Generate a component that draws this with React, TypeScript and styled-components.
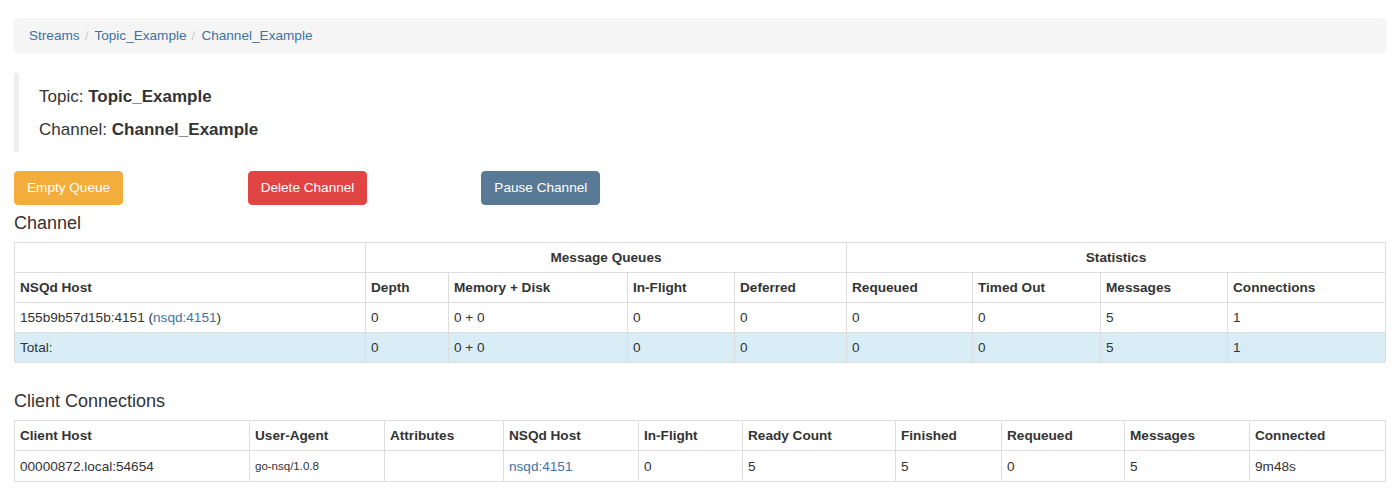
import React from 'react';
import styled, { createGlobalStyle } from 'styled-components';

const Global = createGlobalStyle`
  html, body { margin: 0; padding: 0; background: #fff; }
  body {
    font-family: "Liberation Sans", Arial, Helvetica, sans-serif;
    font-size: 13.6px;
    line-height: 20px;
    color: #333;
  }
`;

const Page = styled.div`
  padding: 18px 14px 0 14px;
`;

const Breadcrumb = styled.ol`
  list-style: none;
  margin: 0 0 20px 0;
  padding: 8px 15px;
  height: 19px;
  display: flex;
  align-items: center;
  background: #f5f5f5;
  border-radius: 4px;
`;

const Crumb = styled.li`
  color: #3d73a5;
  & + &::before {
    content: '/';
    color: #ccc;
    padding: 0 6px 0 5px;
  }
`;

const Quote = styled.blockquote`
  margin: 0 0 20px 0;
  padding: 11px 20px 10px 20px;
  border-left: 5px solid #eee;
  font-size: 17px;
  line-height: 25px;
  display: flex;
  flex-direction: column;
  gap: 8px;
`;

const ButtonRow = styled.div`
  display: grid;
  grid-template-columns: repeat(6, 1fr);
  margin: -1px -15px 0 -15px;
`;

const ButtonCell = styled.div`
  padding: 0 15px;
`;

const Button = styled.button<{ $bg: string }>`
  font-family: inherit;
  font-size: 13.6px;
  line-height: 20px;
  color: #fff;
  background: ${p => p.$bg};
  border: 1px solid ${p => p.$bg};
  border-radius: 4px;
  padding: 6px 12px;
  cursor: pointer;
`;

const Heading = styled.h4<{ $top: number }>`
  font-size: 18px;
  font-weight: normal;
  line-height: 20px;
  margin: ${p => p.$top}px 0 9px 0;
`;

const Table = styled.table`
  width: 100%;
  table-layout: fixed;
  border-collapse: collapse;
  margin-bottom: 20px;
`;

const Th = styled.th<{ $center?: boolean }>`
  border: 1px solid #ddd;
  padding: 5px 5px;
  height: 19px;
  line-height: 19px;
  text-align: ${p => (p.$center ? 'center' : 'left')};
  font-weight: bold;
`;

const Td = styled.td`
  border: 1px solid #ddd;
  padding: 5px 5px;
  height: 19px;
  line-height: 19px;
  white-space: nowrap;
`;

const Row = styled.tr<{ $info?: boolean }>`
  background: ${p => (p.$info ? '#d9edf7' : 'transparent')};
`;

const Link = styled.a`
  color: #3d73a5;
  text-decoration: none;
`;

const Small = styled.small`
  font-size: 11.5px;
`;

const channelCols = [351, 83, 179, 107, 112, 126, 128, 127, 158];
const clientCols = [235, 135, 119, 135, 104, 153, 106, 123, 125, 136];

const ColGroup = ({ widths }: { widths: number[] }) => (
  <colgroup>
    {widths.map((w, i) => (
      <col key={i} style={{ width: w }} />
    ))}
  </colgroup>
);

const App = () => {
  return (
    <Page>
      <Global />
      <Breadcrumb>
        <Crumb>Streams</Crumb>
        <Crumb>Topic_Example</Crumb>
        <Crumb>Channel_Example</Crumb>
      </Breadcrumb>

      <Quote>
        <div>Topic: <strong>Topic_Example</strong></div>
        <div>Channel: <strong>Channel_Example</strong></div>
      </Quote>

      <ButtonRow>
        <ButtonCell><Button $bg="#f2ad3a">Empty Queue</Button></ButtonCell>
        <ButtonCell><Button $bg="#e04443">Delete Channel</Button></ButtonCell>
        <ButtonCell><Button $bg="#597a97">Pause Channel</Button></ButtonCell>
      </ButtonRow>

      <Heading $top={8}>Channel</Heading>
      <Table>
        <ColGroup widths={channelCols} />
        <thead>
          <tr>
            <Th></Th>
            <Th colSpan={4} $center>Message Queues</Th>
            <Th colSpan={4} $center>Statistics</Th>
          </tr>
          <tr>
            <Th>NSQd Host</Th>
            <Th>Depth</Th>
            <Th>Memory + Disk</Th>
            <Th>In-Flight</Th>
            <Th>Deferred</Th>
            <Th>Requeued</Th>
            <Th>Timed Out</Th>
            <Th>Messages</Th>
            <Th>Connections</Th>
          </tr>
        </thead>
        <tbody>
          <Row>
            <Td>155b9b57d15b:4151 (<Link>nsqd:4151</Link>)</Td>
            <Td>0</Td>
            <Td>0 + 0</Td>
            <Td>0</Td>
            <Td>0</Td>
            <Td>0</Td>
            <Td>0</Td>
            <Td>5</Td>
            <Td>1</Td>
          </Row>
          <Row $info>
            <Td>Total:</Td>
            <Td>0</Td>
            <Td>0 + 0</Td>
            <Td>0</Td>
            <Td>0</Td>
            <Td>0</Td>
            <Td>0</Td>
            <Td>5</Td>
            <Td>1</Td>
          </Row>
        </tbody>
      </Table>

      <Heading $top={28}>Client Connections</Heading>
      <Table>
        <ColGroup widths={clientCols} />
        <thead>
          <tr>
            <Th>Client Host</Th>
            <Th>User-Agent</Th>
            <Th>Attributes</Th>
            <Th>NSQd Host</Th>
            <Th>In-Flight</Th>
            <Th>Ready Count</Th>
            <Th>Finished</Th>
            <Th>Requeued</Th>
            <Th>Messages</Th>
            <Th>Connected</Th>
          </tr>
        </thead>
        <tbody>
          <Row>
            <Td>00000872.local:54654</Td>
            <Td><Small>go-nsq/1.0.8</Small></Td>
            <Td></Td>
            <Td><Link>nsqd:4151</Link></Td>
            <Td>0</Td>
            <Td>5</Td>
            <Td>5</Td>
            <Td>0</Td>
            <Td>5</Td>
            <Td>9m48s</Td>
          </Row>
        </tbody>
      </Table>
    </Page>
  );
};

export default App;
